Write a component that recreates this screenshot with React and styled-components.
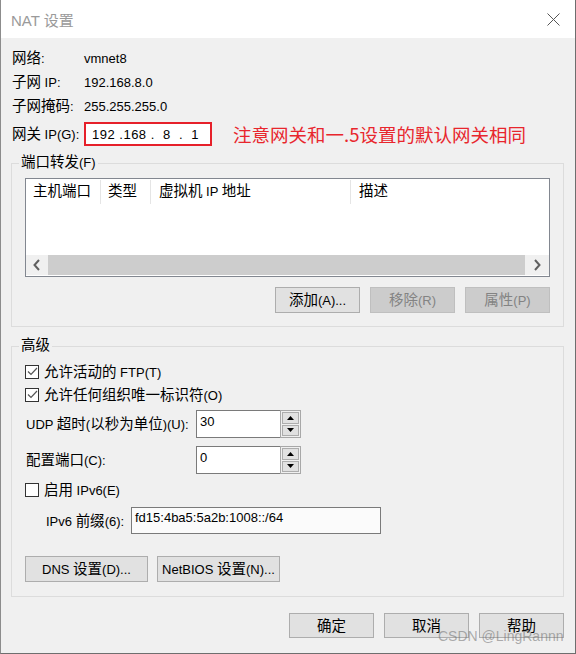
import React from "react";
import styled, { createGlobalStyle } from "styled-components";

const GlobalStyle = createGlobalStyle`
  html, body {
    margin: 0;
    padding: 0;
    background: #fff;
  }
  body {
    font-family: "Liberation Sans", "Noto Sans CJK SC", sans-serif;
    font-size: 13px;
    color: #000;
  }
  * {
    box-sizing: border-box;
  }
`;

const Window = styled.div`
  position: relative;
  width: 576px;
  height: 654px;
  display: flex;
  flex-direction: column;
  background: #f0f0f0;
  border-left: 1px solid #8c8c8c;
  border-right: 1px solid #6e6e6e;
  border-bottom: 1px solid #6e6e6e;
  overflow: hidden;
`;

const TitleBar = styled.div`
  flex: none;
  height: 38px;
  background: #fff;
  display: flex;
  align-items: center;
  justify-content: space-between;
  padding: 0 15px 0 10px;
`;

const Title = styled.div`
  font-size: 15px;
  color: #9a9a9a;
`;

const Body = styled.div`
  flex: 1;
  padding: 8px 11px 0 10px;
  display: flex;
  flex-direction: column;
`;

// CJK runs are drawn a bit larger than the latin text, as in the dialog font
const Han = styled.span`
  font-family: "Noto Sans CJK SC", sans-serif;
  font-size: 14.5px;
  line-height: 1;
`;

const InfoRow = styled.div`
  display: grid;
  grid-template-columns: 72px 1fr;
  align-items: center;
  height: 24px;
  padding-left: 1px;
  margin-top: ${(p) => (p.$gap ? p.$gap : 0)}px;
`;

const GatewayBox = styled.div`
  width: 128px;
  height: 24px;
  border: 2px solid #e6202a;
  background: #fff;
  display: flex;
  align-items: center;
  padding-left: 6px;
  white-space: pre;
  letter-spacing: 0.5px;
`;

const GatewayLine = styled.div`
  display: flex;
  align-items: center;
`;

const Note = styled.span`
  margin-left: 21px;
  font-size: 18.5px;
  color: #e8262d;
  font-family: "Noto Sans CJK SC", sans-serif;
  line-height: 1;
`;

const Group = styled.fieldset`
  margin: ${(p) => p.$top}px 0 0 0;
  padding: ${(p) => p.$padTop}px 13px ${(p) => p.$padBottom}px 13px;
  border: 1px solid #dcdcdc;
  min-inline-size: 0;
`;

const Legend = styled.legend`
  margin-left: -6px;
  padding: 0 2px;
  line-height: 18px;
  height: 18px;
`;

const ListView = styled.div`
  height: 99px;
  border: 1px solid #828790;
  background: #fff;
  display: flex;
  flex-direction: column;
`;

const ListHeader = styled.div`
  height: 29px;
  display: grid;
  grid-template-columns: 75px 50px 200px 1fr;
  align-items: start;
`;

const HeadCell = styled.div`
  height: 24px;
  margin-top: 1px;
  line-height: 24px;
  padding-left: ${(p) => p.$pad || 7}px;
  border-right: ${(p) => (p.$last ? "none" : "1px solid #e5e5e5")};
`;

const ListBody = styled.div`
  flex: 1;
`;

const HScroll = styled.div`
  height: 20px;
  margin-bottom: 1px;
  display: flex;
`;

const ScrollArrow = styled.div`
  width: ${(p) => p.$w}px;
  background: #f0f0f0;
  display: flex;
  align-items: center;
  justify-content: center;
`;

const ScrollTrack = styled.div`
  flex: 1;
  background: #cdcdcd;
`;

const ButtonRow = styled.div`
  display: flex;
  justify-content: ${(p) => p.$align || "flex-end"};
  gap: ${(p) => p.$gap || 10}px;
  margin-top: ${(p) => p.$top || 0}px;
`;

const Button = styled.div`
  width: ${(p) => p.$w || 85}px;
  height: ${(p) => p.$h || 26}px;
  display: flex;
  align-items: center;
  justify-content: center;
  background: ${(p) => (p.$disabled ? "#cccccc" : "#e1e1e1")};
  border: 1px solid ${(p) => (p.$disabled ? "#bfbfbf" : "#adadad")};
  color: ${(p) => (p.$disabled ? "#838383" : "#000")};
  font-size: 13px;
`;

const CheckRow = styled.div`
  display: flex;
  align-items: center;
  height: 23px;
  gap: 5px;
  margin-top: ${(p) => p.$top || 0}px;
`;

const Box = styled.div`
  width: 14px;
  height: 14px;
  border: 1px solid #333;
  background: #fff;
  display: flex;
  align-items: center;
  justify-content: center;
`;

const FieldRow = styled.div`
  display: flex;
  align-items: center;
  margin-top: ${(p) => p.$top || 0}px;
  margin-left: ${(p) => p.$indent || 1}px;
`;

const FieldLabel = styled.div`
  width: ${(p) => p.$w}px;
  flex: none;
  white-space: nowrap;
`;

const Spin = styled.div`
  width: 105px;
  height: 28px;
  display: flex;
`;

const SpinText = styled.div`
  flex: 1;
  background: #fff;
  border: 1px solid #7a7a7a;
  border-right: none;
  padding: 3px 0 0 3px;
`;

const SpinButtons = styled.div`
  width: 21px;
  border: 1px solid #a8a8a8;
  background: #f0f0f0;
  display: flex;
  flex-direction: column;
  gap: 1px;
  padding: 1px;
`;

const SpinBtn = styled.div`
  flex: 1;
  background: #e1e1e1;
  border: 1px solid #adadad;
  display: flex;
  align-items: center;
  justify-content: center;
`;

const PrefixInput = styled.div`
  width: 250px;
  height: 27px;
  background: #fbfbfb;
  border: 1px solid #7a7a7a;
  padding: 2px 0 0 3px;
`;

const Watermark = styled.div`
  position: absolute;
  left: 437px;
  top: 628px;
  font-size: 14px;
  color: rgba(110, 110, 110, 0.55);
  font-family: "Liberation Sans", sans-serif;
  pointer-events: none;
`;

const T = ({ children }) => (
  <span>
    {String(children)
      .split(/([\u3400-\u9fff]+)/)
      .map((part, i) => (i % 2 ? <Han key={i}>{part}</Han> : part))}
  </span>
);

const Check = ({ checked }) => (
  <Box>
    {checked && (
      <svg width="11" height="9" viewBox="0 0 11 9">
        <polyline points="1,4.5 4,7.5 10,1" fill="none" stroke="#555" strokeWidth="1.2" />
      </svg>
    )}
  </Box>
);

const Tri = ({ down }) => (
  <svg width="7" height="4" viewBox="0 0 7 4">
    <polygon points={down ? "0,0 7,0 3.5,4" : "3.5,0 7,4 0,4"} fill="#000" />
  </svg>
);

const SpinBox = ({ value }) => (
  <Spin>
    <SpinText>{value}</SpinText>
    <SpinButtons>
      <SpinBtn>
        <Tri />
      </SpinBtn>
      <SpinBtn>
        <Tri down />
      </SpinBtn>
    </SpinButtons>
  </Spin>
);

const Chevron = ({ right }) => (
  <svg width="8" height="12" viewBox="0 0 8 12">
    <polyline
      points={right ? "2,1 6.5,6 2,11" : "6,1 1.5,6 6,11"}
      fill="none"
      stroke="#606060"
      strokeWidth="2"
    />
  </svg>
);

export default function App() {
  return (
    <>
      <GlobalStyle />
      <Window>
        <TitleBar>
          <Title>NAT 设置</Title>
          <svg width="13" height="13" viewBox="0 0 13 13">
            <path d="M0.5 0.5 L12.5 12.5 M12.5 0.5 L0.5 12.5" stroke="#555" strokeWidth="1" />
          </svg>
        </TitleBar>
        <Body>
          <InfoRow>
            <T>网络:</T>
            <span>vmnet8</span>
          </InfoRow>
          <InfoRow>
            <T>子网 IP:</T>
            <span>192.168.8.0</span>
          </InfoRow>
          <InfoRow>
            <T>子网掩码:</T>
            <span>255.255.255.0</span>
          </InfoRow>
          <InfoRow $gap={4}>
            <T>网关 IP(G):</T>
            <GatewayLine>
              <GatewayBox>{"192 .168 .  8  .  1"}</GatewayBox>
              <Note>注意网关和一.5设置的默认网关相同</Note>
            </GatewayLine>
          </InfoRow>

          <Group $top={8} $padTop={6} $padBottom={13}>
            <Legend><T>端口转发(F)</T></Legend>
            <ListView>
              <ListHeader>
                <HeadCell><T>主机端口</T></HeadCell>
                <HeadCell><T>类型</T></HeadCell>
                <HeadCell $pad={8}><T>虚拟机 IP 地址</T></HeadCell>
                <HeadCell $pad={8} $last>
                  <T>描述</T>
                </HeadCell>
              </ListHeader>
              <ListBody />
              <HScroll>
                <ScrollArrow $w={22}>
                  <Chevron />
                </ScrollArrow>
                <ScrollTrack />
                <ScrollArrow $w={24}>
                  <Chevron right />
                </ScrollArrow>
              </HScroll>
            </ListView>
            <ButtonRow $top={10}>
              <Button><T>添加(A)...</T></Button>
              <Button $disabled><T>移除(R)</T></Button>
              <Button $disabled><T>属性(P)</T></Button>
            </ButtonRow>
          </Group>

          <Group $top={10} $padTop={5} $padBottom={14}>
            <Legend><T>高级</T></Legend>
            <CheckRow>
              <Check checked />
              <T>允许活动的 FTP(T)</T>
            </CheckRow>
            <CheckRow>
              <Check checked />
              <T>允许任何组织唯一标识符(O)</T>
            </CheckRow>
            <FieldRow $top={4}>
              <FieldLabel $w={170}><T>UDP 超时(以秒为单位)(U):</T></FieldLabel>
              <SpinBox value="30" />
            </FieldRow>
            <FieldRow $top={8}>
              <FieldLabel $w={170}><T>配置端口(C):</T></FieldLabel>
              <SpinBox value="0" />
            </FieldRow>
            <CheckRow $top={4}>
              <Check />
              <T>启用 IPv6(E)</T>
            </CheckRow>
            <FieldRow $top={6} $indent={21}>
              <FieldLabel $w={85}><T>IPv6 前缀(6):</T></FieldLabel>
              <PrefixInput>fd15:4ba5:5a2b:1008::/64</PrefixInput>
            </FieldRow>
            <ButtonRow $top={22} $align="flex-start" $gap={9}>
              <Button $w={123}><T>DNS 设置(D)...</T></Button>
              <Button $w={123}><T>NetBIOS 设置(N)...</T></Button>
            </ButtonRow>
          </Group>

          <ButtonRow $top={16}>
            <Button $h={25}><T>确定</T></Button>
            <Button $h={25}><T>取消</T></Button>
            <Button $h={25}><T>帮助</T></Button>
          </ButtonRow>
        </Body>
        <Watermark>CSDN @LingRannn</Watermark>
      </Window>
    </>
  );
}
